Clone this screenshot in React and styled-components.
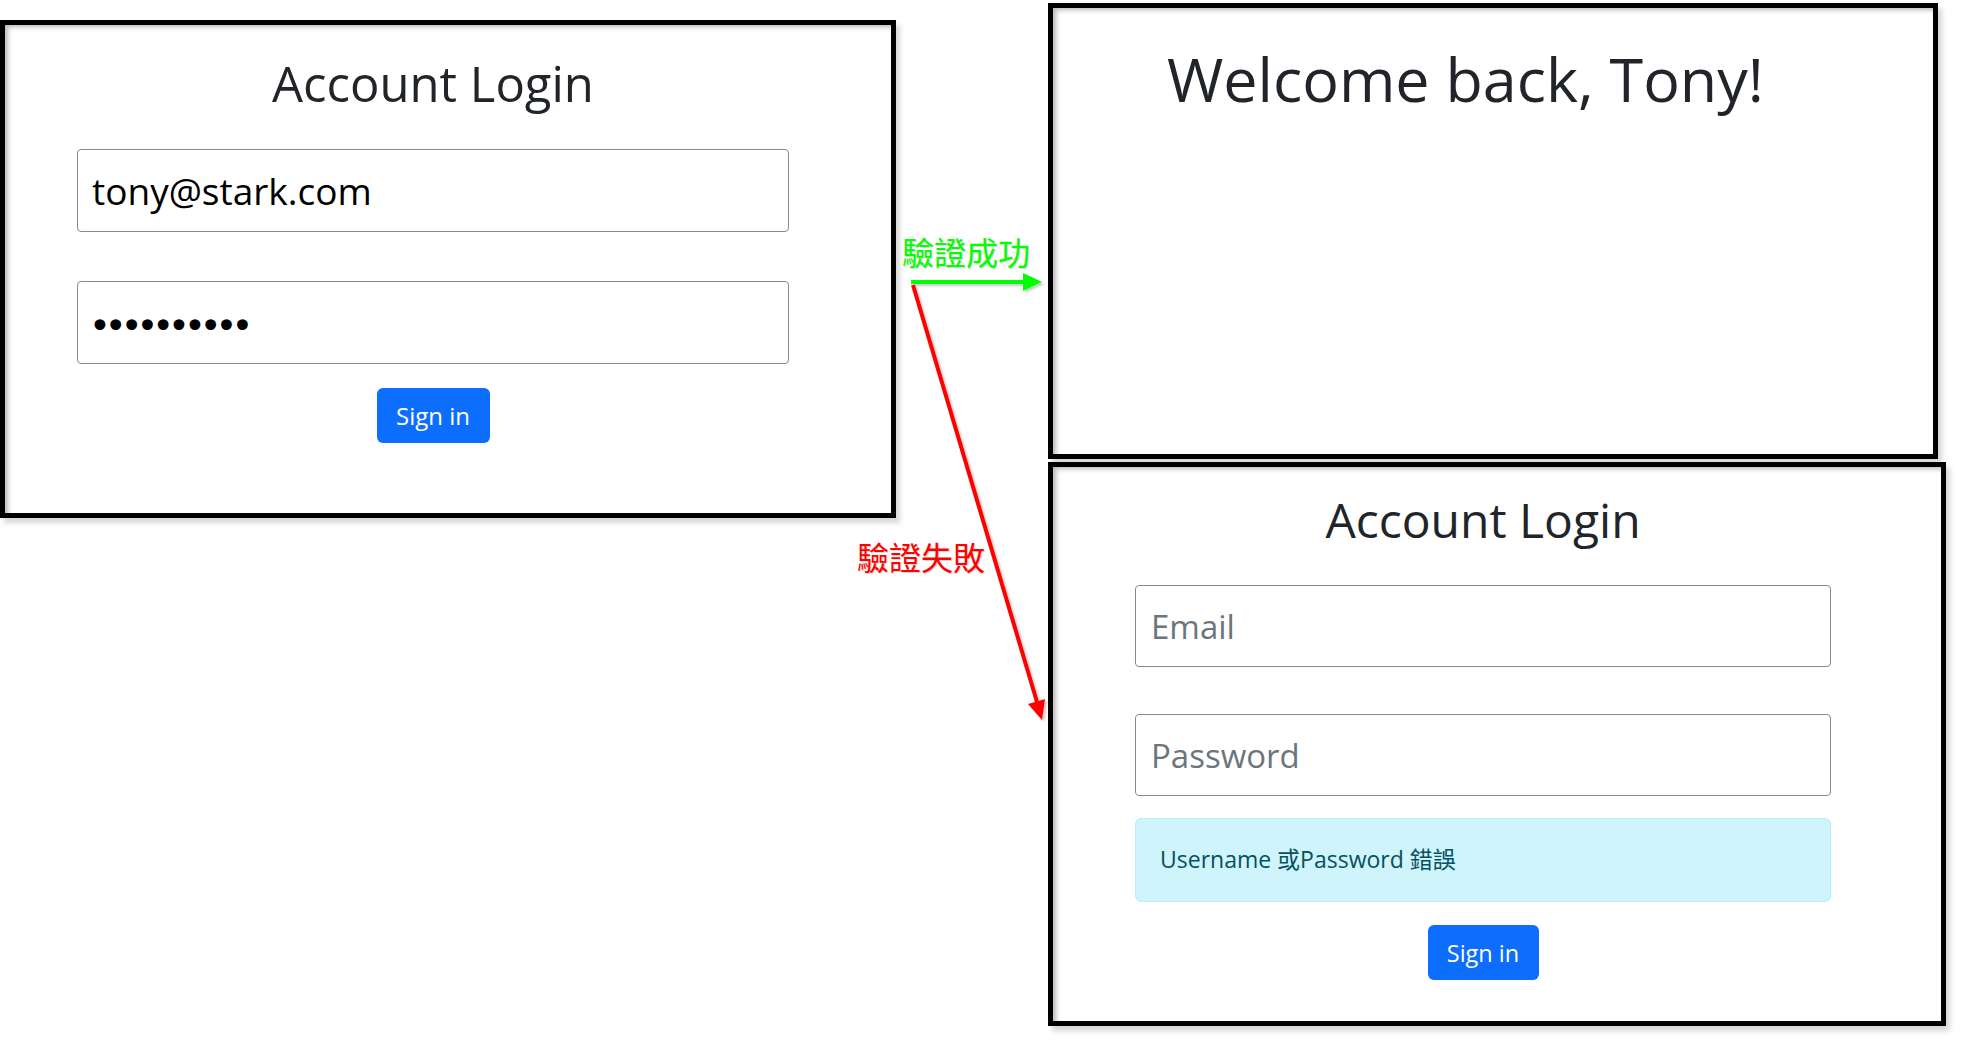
import React from 'react';
import styled, { createGlobalStyle } from 'styled-components';

const GlobalStyle = createGlobalStyle`
  html, body {
    margin: 0;
    padding: 0;
    background: #fff;
  }
`;

const S_Canvas = styled.div`
  position: relative;
  width: 1966px;
  height: 1040px;
  overflow: hidden;
  background: #fff;
  font-family: "Open Sans", "Noto Sans CJK TC", sans-serif;
  color: #212529;`;

const S_Board = styled.div`
  display: flex;
  flex-direction: row;
  align-items: flex-start;
  gap: 152px;`;

const S_LeftColumn = styled.div`
  padding-top: 20px;`;

const S_RightColumn = styled.div`
  display: flex;
  flex-direction: column;
  gap: 3px;
  padding-top: 3px;`;

// a framed screenshot of the page, with the window's shadow inside
const S_Frame = styled.div`
  box-sizing: border-box;
  width: ${p => p.$w}px;
  height: ${p => p.$h}px;
  border: 5px solid #000;
  background: #fff;
  padding: ${p => p.$pad};
  box-shadow: 4px 5px 5px rgba(0, 0, 0, 0.16),
    inset 7px 6px 5px -4px rgba(0, 0, 0, 0.28);`;

const S_Form = styled.div`
  display: flex;
  flex-direction: column;
  align-items: center;
  width: ${p => p.$w}px;`;

const S_Title = styled.h1`
  margin: 0;
  font-family: "Open Sans", sans-serif;
  font-weight: 400;
  font-size: ${p => p.$size}px;
  line-height: ${p => p.$line}px;
  color: #212529;
  white-space: nowrap;`;

const S_Field = styled.input`
  box-sizing: border-box;
  display: block;
  width: 100%;
  height: ${p => p.$h}px;
  margin: ${p => p.$mt}px 0 0;
  padding: 0 ${p => p.$pl}px;
  border: 1px solid #8a8a8a;
  border-radius: 4px;
  background: #fff;
  outline: none;
  font-family: "Open Sans", sans-serif;
  font-size: ${p => p.$size}px;
  color: #000;
  &::placeholder {
    color: #6c757d;
  }`;

const S_PasswordField = styled(S_Field)`
  padding-top: 8px;
  font-family: "DejaVu Sans", sans-serif;
  letter-spacing: -6px;`;

const S_Alert = styled.div`
  box-sizing: border-box;
  width: 100%;
  height: ${p => p.$h}px;
  margin-top: ${p => p.$mt}px;
  padding: 0 24px 4px;
  display: flex;
  align-items: center;
  border: 1px solid #b6effb;
  border-radius: 6px;
  background: #cff4fc;
  color: #055160;
  font-family: "Open Sans", "Noto Sans CJK TC", sans-serif;
  font-size: 23px;`;

const S_Button = styled.button`
  box-sizing: border-box;
  width: ${p => p.$w}px;
  height: ${p => p.$h}px;
  margin-top: ${p => p.$mt}px;
  padding: 0;
  border: none;
  border-radius: 6px;
  background: #0d6efd;
  color: #fff;
  font-family: "Open Sans", sans-serif;
  font-size: ${p => p.$size}px;
  cursor: pointer;`;

const S_Welcome = styled.h1`
  margin: 0;
  font-family: "Open Sans", sans-serif;
  font-weight: 400;
  font-size: 61px;
  line-height: 72px;
  color: #212529;
  white-space: nowrap;`;

const S_Arrows = styled.svg`
  position: absolute;
  left: 0;
  top: 0;
  pointer-events: none;`;

const S_Label = styled.span`
  position: absolute;
  left: ${p => p.$x}px;
  top: ${p => p.$y}px;
  font-family: "Noto Sans CJK TC", "Liberation Serif", serif;
  font-size: 32px;
  line-height: 32px;
  color: ${p => p.$color};
  text-shadow: 1px 1px 1px rgba(0, 0, 0, 0.18);
  white-space: nowrap;`;

const LoginScreen = ({ filled }) => (
  <S_Frame $w={filled ? 896 : 898} $h={filled ? 498 : 564} $pad={filled ? '28px 0 0 72px' : '24px 0 0 82px'}>
    {filled ? (
      <S_Form $w={712}>
        <S_Title $size={49} $line={60}>Account Login</S_Title>
        <S_Field $h={83} $mt={36} $pl={14} $size={37} type="email" value="tony@stark.com" readOnly />
        <S_PasswordField $h={83} $mt={49} $pl={11} $size={37} type="password" value="0123456789" readOnly />
        <S_Button $w={113} $h={55} $mt={24} $size={24}>Sign in</S_Button>
      </S_Form>
    ) : (
      <S_Form $w={696}>
        <S_Title $size={48} $line={58}>Account Login</S_Title>
        <S_Field $h={82} $mt={36} $pl={15} $size={33} type="email" placeholder="Email" readOnly />
        <S_Field $h={82} $mt={47} $pl={15} $size={33} type="password" placeholder="Password" readOnly />
        <S_Alert $h={84} $mt={22}>Username 或Password 錯誤</S_Alert>
        <S_Button $w={111} $h={55} $mt={23} $size={23.5}>Sign in</S_Button>
      </S_Form>
    )}
  </S_Frame>
);

const WelcomeScreen = () => (
  <S_Frame $w={890} $h={456} $pad="35px 0 0 114px">
    <S_Welcome>Welcome back, Tony!</S_Welcome>
  </S_Frame>
);

const Arrows = () => (
  <S_Arrows width="1966" height="1040" viewBox="0 0 1966 1040">
    <defs>
      <filter id="arrowShadow" x="-20%" y="-20%" width="140%" height="140%">
        <feDropShadow dx="2" dy="2" stdDeviation="1" floodColor="#000" floodOpacity="0.22" />
      </filter>
    </defs>
    <g filter="url(#arrowShadow)">
      <line x1="911" y1="282" x2="1026" y2="282" stroke="#00ff00" strokeWidth="4" />
      <polygon points="1042,282 1023,273 1023,291" fill="#00ff00" />
      <line x1="913" y1="285" x2="1037" y2="702" stroke="#ff0000" strokeWidth="4" />
      <polygon points="1042,720 1045,699 1028,704" fill="#ff0000" />
    </g>
  </S_Arrows>
);

const App = () => {
  return (
    <S_Canvas>
      <GlobalStyle />
      <S_Board>
        <S_LeftColumn>
          <LoginScreen filled />
        </S_LeftColumn>
        <S_RightColumn>
          <WelcomeScreen />
          <LoginScreen />
        </S_RightColumn>
      </S_Board>
      <Arrows />
      <S_Label $x={902} $y={235} $color="#00ff00">驗證成功</S_Label>
      <S_Label $x={857} $y={540} $color="#ff0000">驗證失敗</S_Label>
    </S_Canvas>
  );
};

export default App;
